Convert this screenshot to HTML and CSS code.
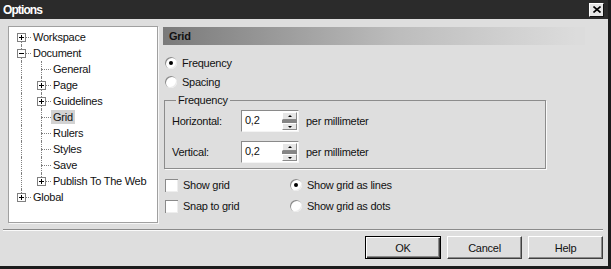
FILE: index.html
```html
<!DOCTYPE html>
<html lang="en">
<head>
  <meta charset="UTF-8" />
  <title>Options</title>
  <link rel="stylesheet" href="styles.css">
</head>
<body>

<div class="window">
  <div class="titlebar">
    <span>Options</span>
    <div class="close">
      <svg width="8" height="7" viewBox="0 0 8 7"><path d="M0.5 0.5 L7.5 6.5 M7.5 0.5 L0.5 6.5" stroke="#000" stroke-width="1.6"/></svg>
    </div>
  </div>

  <div class="content">
    <div class="main">
      <div class="tree">
        <div class="row"><div class="cell first"><svg class="box" width="9" height="9"><rect x="0.5" y="0.5" width="8" height="8" fill="#fff" stroke="#808080"/><path d="M2 4.5h5M4.5 2v5" stroke="#000"/></svg></div><span class="label">Workspace</span></div>
        <div class="row"><div class="cell tee"><svg class="box" width="9" height="9"><rect x="0.5" y="0.5" width="8" height="8" fill="#fff" stroke="#808080"/><path d="M2 4.5h5" stroke="#000"/></svg></div><span class="label">Document</span></div>
        <div class="row"><div class="cell pipe"></div><div class="cell tee"></div><span class="label">General</span></div>
        <div class="row"><div class="cell pipe"></div><div class="cell tee"><svg class="box" width="9" height="9"><rect x="0.5" y="0.5" width="8" height="8" fill="#fff" stroke="#808080"/><path d="M2 4.5h5M4.5 2v5" stroke="#000"/></svg></div><span class="label">Page</span></div>
        <div class="row"><div class="cell pipe"></div><div class="cell tee"><svg class="box" width="9" height="9"><rect x="0.5" y="0.5" width="8" height="8" fill="#fff" stroke="#808080"/><path d="M2 4.5h5M4.5 2v5" stroke="#000"/></svg></div><span class="label">Guidelines</span></div>
        <div class="row selected"><div class="cell pipe"></div><div class="cell tee"></div><span class="label">Grid</span></div>
        <div class="row"><div class="cell pipe"></div><div class="cell tee"></div><span class="label">Rulers</span></div>
        <div class="row"><div class="cell pipe"></div><div class="cell tee"></div><span class="label">Styles</span></div>
        <div class="row"><div class="cell pipe"></div><div class="cell tee"></div><span class="label">Save</span></div>
        <div class="row"><div class="cell pipe"></div><div class="cell end"><svg class="box" width="9" height="9"><rect x="0.5" y="0.5" width="8" height="8" fill="#fff" stroke="#808080"/><path d="M2 4.5h5M4.5 2v5" stroke="#000"/></svg></div><span class="label">Publish To The Web</span></div>
        <div class="row"><div class="cell end"><svg class="box" width="9" height="9"><rect x="0.5" y="0.5" width="8" height="8" fill="#fff" stroke="#808080"/><path d="M2 4.5h5M4.5 2v5" stroke="#000"/></svg></div><span class="label">Global</span></div>
      </div>

      <div class="page">
        <div class="page-title">Grid</div>

        <div class="radio-list">
          <div class="opt"><span class="radio on"></span>Frequency</div>
          <div class="opt"><span class="radio"></span>Spacing</div>
        </div>

        <fieldset class="group">
          <legend>Frequency</legend>
          <div class="field-row">
            <span class="field-label">Horizontal:</span>
            <div class="spin"><span class="spin-value">0,2</span>
              <div class="spin-btns"><div class="spin-up"></div><div class="spin-band"></div><div class="spin-down"></div></div>
            </div>
            <span class="unit">per millimeter</span>
          </div>
          <div class="field-row">
            <span class="field-label">Vertical:</span>
            <div class="spin"><span class="spin-value">0,2</span>
              <div class="spin-btns"><div class="spin-up"></div><div class="spin-band"></div><div class="spin-down"></div></div>
            </div>
            <span class="unit">per millimeter</span>
          </div>
        </fieldset>

        <div class="options">
          <div class="opt"><span class="check"></span>Show grid</div>
          <div class="opt"><span class="radio on"></span>Show grid as lines</div>
          <div class="opt"><span class="check"></span>Snap to grid</div>
          <div class="opt"><span class="radio"></span>Show grid as dots</div>
        </div>
      </div>
    </div>

    <div class="separator"></div>

    <div class="buttons">
      <button class="btn default">OK</button>
      <button class="btn">Cancel</button>
      <button class="btn">Help</button>
    </div>
  </div>
</div>

</body>
</html>
```

FILE: styles.css
```css
body {
  margin: 0;
  font-family: "Liberation Sans", Arial, sans-serif;
  font-size: 11px;
  letter-spacing: -0.25px;
  color: #111;
  background: #dedede;
}

.window {
  width: 608px;
  height: 266px;
  border-right: 3px solid #1c1c1c;
  border-bottom: 3px solid #1c1c1c;
  background: #dedede;
  display: flex;
  flex-direction: column;
}

.titlebar {
  height: 19px;
  flex: none;
  background: #2b2b2b;
  color: #fff;
  font-weight: bold;
  font-size: 12px;
  letter-spacing: -0.9px;
  display: flex;
  align-items: center;
  justify-content: space-between;
  padding: 0 4px 0 3px;
}

.close {
  width: 13px;
  height: 12px;
  background: #e6e6e6;
  border: 1px solid;
  border-color: #fff #111 #111 #fff;
  display: flex;
  align-items: center;
  justify-content: center;
}

.content {
  flex: 1;
  padding: 7px 5px 0 8px;
  display: flex;
  flex-direction: column;
}

.main {
  display: flex;
  gap: 5px;
  height: 197px;
}

/* tree */
.tree {
  width: 150px;
  box-sizing: border-box;
  background: #fff;
  border: 1px solid #a0a0a0;
  box-shadow: 1px 1px 0 #f6f6f6;
  padding: 2px 0 0 2px;
}

.row {
  display: flex;
  align-items: center;
  height: 16px;
}

.cell {
  position: relative;
  width: 20px;
  height: 16px;
  flex: none;
}

.cell::before,
.cell::after {
  content: "";
  position: absolute;
}

.cell.pipe::before,
.cell.tee::before {
  left: 10px;
  top: 0;
  bottom: 0;
  border-left: 1px dotted #808080;
}

.cell.first::before {
  left: 10px;
  top: 8px;
  bottom: 0;
  border-left: 1px dotted #808080;
}

.cell.end::before {
  left: 10px;
  top: 0;
  height: 8px;
  border-left: 1px dotted #808080;
}

.cell.tee::after,
.cell.end::after,
.cell.first::after {
  left: 10px;
  top: 8px;
  width: 10px;
  border-top: 1px dotted #808080;
}

.box {
  position: absolute;
  left: 6px;
  top: 4px;
  z-index: 1;
}

.label {
  padding: 1px 2px;
  white-space: nowrap;
}

.selected .label {
  background: #d2d2d2;
}

/* right page */
.page {
  flex: 1;
  display: flex;
  flex-direction: column;
  padding-top: 1px;
}

.page-title {
  width: 422px;
  height: 18px;
  box-sizing: border-box;
  padding-left: 6px;
  display: flex;
  align-items: center;
  font-weight: bold;
  background: linear-gradient(to right, #7a7a7a, #bcbcbc 55%, #dcdcdc 98%);
}

.radio-list {
  margin-top: 10px;
  display: flex;
  flex-direction: column;
  gap: 3px;
}

.opt {
  display: flex;
  align-items: center;
  gap: 5px;
  height: 16px;
  padding-left: 2px;
  white-space: nowrap;
}

.radio {
  position: relative;
  width: 12px;
  height: 12px;
  flex: none;
  border-radius: 50%;
  background: #fff;
  box-shadow: inset 1px 1px 0 #8a8a8a, inset -1px -1px 0 #eaeaea;
}

.radio.on::after {
  content: "";
  position: absolute;
  left: 4px;
  top: 4px;
  width: 4px;
  height: 4px;
  border-radius: 50%;
  background: #000;
}

.check {
  width: 13px;
  height: 13px;
  flex: none;
  background: #fff;
  box-shadow: inset 1px 1px 0 #8a8a8a, inset -1px -1px 0 #eeeeee;
}

.group {
  width: 382px;
  box-sizing: border-box;
  margin: 4px 0 0 1px;
  padding: 4px 8px 5px 7px;
  border: 1px solid #8c8c8c;
  box-shadow: 1px 1px 0 #fafafa;
  display: flex;
  flex-direction: column;
  gap: 9px;
}

.group legend {
  padding: 0 2px;
  margin-left: 4px;
}

.field-row {
  display: flex;
  align-items: center;
  height: 22px;
}

.field-label {
  width: 69px;
}

.spin {
  width: 58px;
  height: 22px;
  box-sizing: border-box;
  background: #fff;
  border: 1px solid;
  border-color: #8a8a8a #f4f4f4 #f4f4f4 #8a8a8a;
  display: flex;
  padding: 1px;
}

.spin-value {
  padding: 2px 0 0 2px;
}

.spin-btns {
  margin-left: auto;
  width: 15px;
  display: flex;
  flex-direction: column;
}

.spin-up,
.spin-down {
  flex: 1;
  background: #e6e6e6;
  border: 1px solid;
  border-color: #fff #8a8a8a #8a8a8a #fff;
  position: relative;
}

.spin-up::after,
.spin-down::after {
  content: "";
  position: absolute;
  left: 5px;
  top: 2px;
  border-left: 2px solid transparent;
  border-right: 2px solid transparent;
}

.spin-up::after {
  border-bottom: 2px solid #000;
}

.spin-down::after {
  border-top: 2px solid #000;
}

.spin-band {
  height: 3px;
  background: #858585;
}

.unit {
  margin-left: 7px;
}

.options {
  margin-top: 8px;
  display: grid;
  grid-template-columns: 125px 1fr;
  row-gap: 5px;
}

/* bottom */
.separator {
  margin: 6px 0 0 -5px;
  border-top: 1px solid #8a8a8a;
  border-bottom: 1px solid #fafafa;
}

.buttons {
  display: flex;
  justify-content: flex-end;
  gap: 6px;
  margin-top: 5px;
}

.btn {
  width: 75px;
  height: 23px;
  font-family: inherit;
  font-size: 11px;
  letter-spacing: -0.25px;
  color: #111;
  background: #dedede;
  border: 1px solid;
  border-color: #fff #404040 #404040 #fff;
  box-shadow: inset -1px -1px 0 #8a8a8a;
  padding: 0;
}

.btn.default {
  width: 76px;
  border: 1px solid #000;
  box-shadow: inset 1px 1px 0 #fff, inset -1px -1px 0 #404040, inset -2px -2px 0 #8a8a8a;
}
```
